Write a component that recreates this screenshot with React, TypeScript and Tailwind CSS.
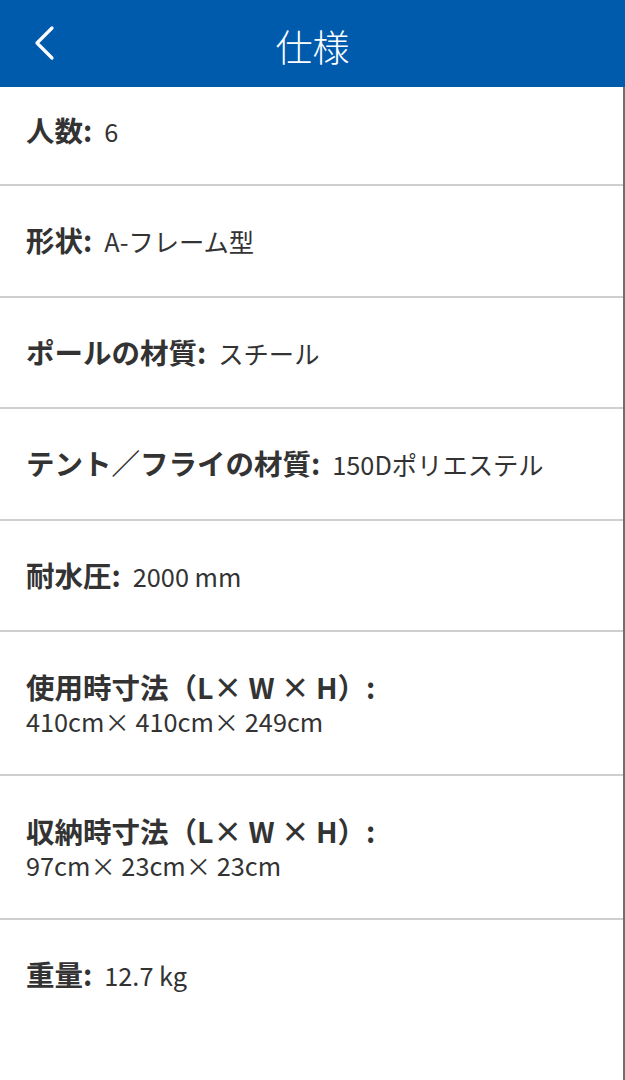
import React from "react";

const rows: { label: string; value: string; stacked?: boolean }[] = [
  { label: "人数:", value: "6" },
  { label: "形状:", value: "A-フレーム型" },
  { label: "ポールの材質:", value: "スチール" },
  { label: "テント／フライの材質:", value: "150Dポリエステル" },
  { label: "耐水圧:", value: "2000 mm" },
  { label: "使用時寸法（L× W × H）:", value: "410cm× 410cm× 249cm", stacked: true },
  { label: "収納時寸法（L× W × H）:", value: "97cm× 23cm× 23cm", stacked: true },
  { label: "重量:", value: "12.7 kg" },
];

export default function App() {
  return (
    <div
      className="w-[625px] h-[1080px] flex flex-col bg-white text-[#333]"
      style={{ fontFamily: '"Noto Sans CJK JP", "Noto Sans", sans-serif' }}
    >
      <header className="h-[87px] shrink-0 bg-[#005bac] relative flex items-center justify-center">
        <button className="absolute left-[33px] top-[25px] w-[22px] h-[36px]">
          <svg width="22" height="36" viewBox="0 0 22 36" fill="none">
            <polyline points="19,3 4,18 19,33" stroke="white" strokeWidth="3.2" strokeLinecap="round" strokeLinejoin="round" />
          </svg>
        </button>
        <h1 className="text-white text-[37px] leading-none font-light mt-[6px]">仕様</h1>
      </header>
      <div className="flex-1 border-r-2 border-[#6f6f6f]">
        {rows.map((r, i) => (
          <div
            key={i}
            className={
              (i === 0 ? "pt-[25px] pb-[35px] " : r.stacked ? "py-[37px] " : "pt-[36px] pb-[36.5px] ") +
              (i < rows.length - 1 ? "border-b-2 border-[#cfcfcf] " : "") +
              "pl-[26px] pr-4"
            }
          >
            {r.stacked ? (
              <div className="flex flex-col">
                <span className="text-[28.5px] leading-[36px] font-bold">{r.label}</span>
                <span className="text-[25.3px] leading-[32px]">{r.value}</span>
              </div>
            ) : (
              <div className="flex items-baseline leading-[36px]">
                <span className="text-[28.5px] font-bold">{r.label}</span>
                <span className="text-[25.3px] ml-[12px]">{r.value}</span>
              </div>
            )}
          </div>
        ))}
      </div>
    </div>
  );
}
